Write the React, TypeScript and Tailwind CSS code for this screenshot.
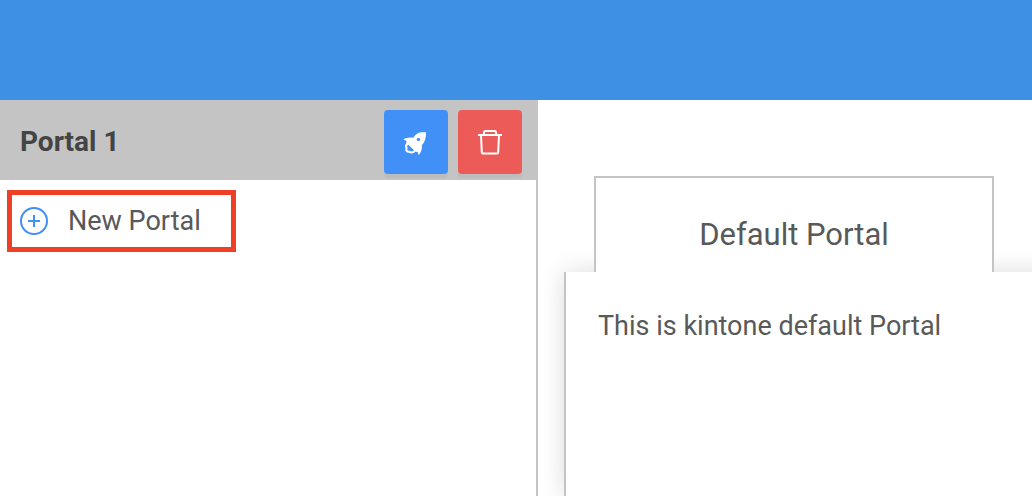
function RocketIcon() {
  return (
    <svg viewBox="0 0 28 28" className="size-7" aria-hidden="true">
      <path
        fill="#fff"
        d="M24 4.300C20.500 4.100 18.500 4.200 16.300 4.900C14 6 12.500 7.800 11.300 9.800C7.500 9.200 4 10 1.300 11.400L4.600 13L4.200 15L13.800 23.800L15.700 24L16.700 26.900C19.500 23.800 20.200 21 19.900 17.200C23 14.200 24.200 9.500 24 4.300Z"
      />
      <circle cx="16.400" cy="11.400" r="1.700" fill="#4190f7" />
      <path
        fill="none"
        stroke="#fff"
        strokeWidth="2"
        strokeLinejoin="round"
        strokeLinecap="round"
        d="M5.500 15.500C3.700 17.500 3.700 19 4.600 20.200C3.500 22.300 5 24.300 7.300 23.700C9.300 25 12 24.300 13 22.500"
      />
    </svg>
  );
}

function TrashIcon() {
  return (
    <svg
      viewBox="0 0 28 28"
      className="size-7"
      fill="none"
      stroke="#fff"
      strokeWidth="2"
      strokeLinejoin="round"
      aria-hidden="true"
    >
      <path d="M2 7H26M8 7V4.500Q8 3 9.500 3H18.500Q20 3 20 4.500V7M5 7L5.800 24.500Q5.900 25.500 7 25.500H21Q22.100 25.500 22.200 24.500L23 7" />
    </svg>
  );
}

function PlusCircleIcon() {
  return (
    <svg
      viewBox="0 0 28 28"
      className="size-7"
      fill="none"
      stroke="#4190f7"
      strokeWidth="2"
      aria-hidden="true"
    >
      <circle cx="14" cy="14" r="13" />
      <path d="M14 8V20M8 14H20" />
    </svg>
  );
}

export default function App() {
  return (
    <div className="flex min-h-screen flex-col overflow-hidden bg-white font-[Roboto,sans-serif] text-[#595959]">
      <header className="h-[100px] shrink-0 bg-[#3e90e4]" />
      <div className="flex grow">
        <aside className="flex w-[538px] shrink-0 flex-col">
          <div className="flex h-20 items-center gap-2.5 bg-[#c4c4c4] pt-1 pr-4 pl-5">
            <h2 className="grow text-[28px] leading-10 font-bold text-[#444]">Portal 1</h2>
            <button
              type="button"
              aria-label="Launch"
              className="flex size-16 items-center justify-center rounded bg-[#4190f7] shadow-[0_4px_0_rgba(0,0,0,0.04)]"
            >
              <RocketIcon />
            </button>
            <button
              type="button"
              aria-label="Delete"
              className="flex size-16 items-center justify-center rounded bg-[#ec5b58] shadow-[0_4px_0_rgba(0,0,0,0.04)]"
            >
              <TrashIcon />
            </button>
          </div>
          <div className="grow border-r-2 border-[#c4c4c4] pt-2.5 pl-[7px]">
            <button
              type="button"
              className="flex items-center gap-5 border-5 border-[#ee4027] py-1.5 pr-[30px] pl-2 text-[27px] leading-10"
            >
              <PlusCircleIcon />
              New Portal
            </button>
          </div>
        </aside>
        <main className="flex min-w-0 grow flex-col pt-[76px] pl-[26px]">
          <h1 className="relative z-10 ml-[30px] flex h-24 w-[400px] items-center justify-center border-2 border-b-0 border-[#c4c4c4] bg-white pt-5 text-[31px] leading-10">
            Default Portal
          </h1>
          <section className="-mr-8 grow border-l-2 border-[#c4c4c4] bg-white px-8 pt-[34px] text-[27px] leading-10 shadow-[0_0_24px_rgba(0,0,0,0.14)]">
            <p>This is kintone default Portal</p>
          </section>
        </main>
      </div>
    </div>
  );
}
